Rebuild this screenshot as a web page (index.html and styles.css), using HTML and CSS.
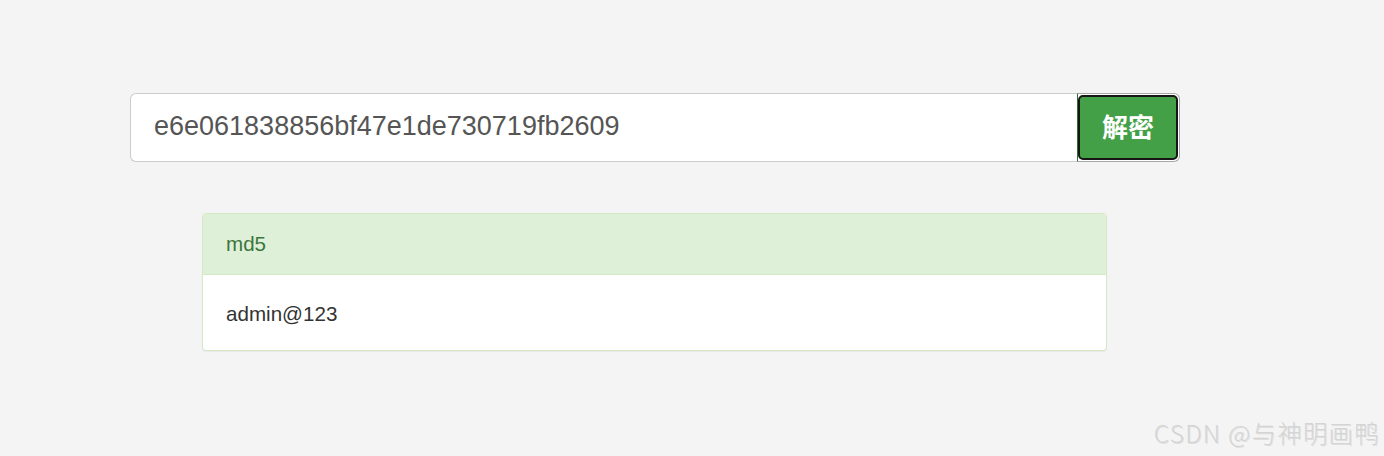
FILE: index.html
```html
<!DOCTYPE html>
<html lang="zh">
<head>
<meta charset="utf-8">
<title>MD5 解密</title>
<link rel="stylesheet" href="styles.css">
</head>
<body>
<main class="page">
  <form class="search">
    <div class="field">e6e061838856bf47e1de730719fb2609</div>
    <div class="btn"><div class="btn-inner">解密</div></div>
  </form>
  <section class="panel">
    <div class="panel-head">md5</div>
    <div class="panel-body">admin@123</div>
  </section>
</main>
<div class="watermark">CSDN @与神明画鸭</div>
</body>
</html>
```
FILE: styles.css
```css
html, body {
  margin: 0;
  padding: 0;
  background: #f4f4f4;
  font-family: "Liberation Sans", Arial, "Noto Sans CJK SC", sans-serif;
}
.page {
  width: 1384px;
  height: 456px;
  padding-top: 93px;
  box-sizing: border-box;
}
.search {
  display: flex;
  margin: 0 0 0 130px;
  width: 1050px;
  height: 69px;
}
.field {
  flex: 1;
  box-sizing: border-box;
  border: 1px solid #ccc;
  border-right: none;
  border-radius: 6px 0 0 6px;
  background: #fff;
  padding-left: 23px;
  font-size: 27px;
  color: #555;
  display: flex;
  align-items: center;
  padding-bottom: 2px;
}
.btn {
  width: 103px;
  box-sizing: border-box;
  border: 1px solid #a8a8a8;
  border-left: 1px solid #2f6f31;
  border-radius: 0 6px 6px 0;
  background: #fff;
  padding: 1px 1px 1px 0;
}
.btn-inner {
  height: 100%;
  box-sizing: border-box;
  border: 2px solid #161616;
  border-radius: 5px;
  background: #43a047;
  color: #fff;
  font-family: "Noto Sans CJK SC", sans-serif;
  font-weight: 700;
  font-size: 26px;
  display: flex;
  align-items: center;
  justify-content: center;
  padding-bottom: 4px;
}
.panel {
  margin: 51px 0 0 202px;
  width: 905px;
  box-sizing: border-box;
  border: 1px solid #d6e9c6;
  border-radius: 4px;
  background: #fff;
  box-shadow: 0 1px 1px rgba(0,0,0,0.05);
  overflow: hidden;
}
.panel-head {
  height: 61px;
  box-sizing: border-box;
  background: #dff0d8;
  border-bottom: 1px solid #d6e9c6;
  color: #3c763d;
  font-size: 20.6px;
  padding: 18px 23px 0;
}
.panel-body {
  height: 75px;
  box-sizing: border-box;
  color: #333;
  font-size: 20.6px;
  padding: 27px 23px 0;
}
.watermark {
  position: absolute;
  right: 4px;
  top: 415px;
  font-family: "Noto Sans CJK SC", sans-serif;
  font-weight: 300;
  font-size: 24.5px;
  letter-spacing: 1.2px;
  color: #d4d4d4;
  text-shadow: 1px 1px 0 rgba(150,150,150,0.22);
}
```
